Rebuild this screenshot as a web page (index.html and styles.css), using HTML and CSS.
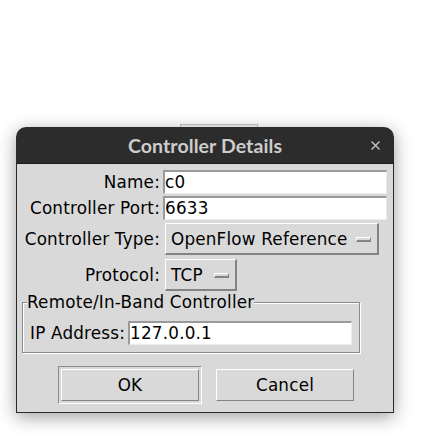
FILE: index.html
```html
<!DOCTYPE html>
<html>
<head>
<meta charset="utf-8">
<link rel="stylesheet" href="styles.css">
</head>
<body>
<div class="desk">
  <div class="behind"></div>
  <div class="dialog">
    <div class="titlebar">
      <span></span>
      <span class="title">Controller Details</span>
      <span class="close"><svg width="9" height="9" viewBox="0 0 9 9"><path d="M0.5 0.5L8.5 8.5M8.5 0.5L0.5 8.5" stroke="#c8c8c8" stroke-width="1.3" fill="none"/></svg></span>
    </div>
    <div class="content">
      <div class="row r1"><span class="lbl">Name:</span><div class="entry">c0</div></div>
      <div class="row r2"><span class="lbl">Controller Port:</span><div class="entry">6633</div></div>
      <div class="row r3"><span class="lbl">Controller Type:</span><div class="menubtn type"><span>OpenFlow Reference</span><i class="ind"></i></div></div>
      <div class="row r4"><span class="lbl">Protocol:</span><div class="menubtn proto"><span>TCP</span><i class="ind"></i></div></div>
      <fieldset class="group">
        <legend>Remote/In-Band Controller</legend>
        <div class="iprow"><span class="iplbl">IP Address:</span><div class="entry">127.0.0.1</div></div>
      </fieldset>
      <div class="buttons">
        <div class="defring"><div class="btn">OK</div></div>
        <div class="btn">Cancel</div>
      </div>
    </div>
  </div>
</div>
</body>
</html>
```

FILE: styles.css
```css
html, body {
  margin: 0;
  padding: 0;
  background: #ffffff;
}
.desk {
  position: relative;
  padding: 127px 0 0 16px;
  height: 315px;
  font-family: "DejaVu Sans", sans-serif;
  font-size: 16.8px;
  letter-spacing: 0.2px;
  color: #000;
}
.behind {
  position: absolute;
  left: 180px;
  top: 124px;
  width: 76px;
  height: 10px;
  border: 1px solid #c6c6c6;
  background: #f4f4f4;
}
.dialog {
  position: relative;
  width: 378px;
  box-shadow: 0 4px 18px rgba(0, 0, 0, 0.38);
  border-radius: 10px 10px 0 0;
}
.titlebar {
  height: 37px;
  box-sizing: border-box;
  background: #2c2c2c;
  border-bottom: 1px solid #1e1e1e;
  border-radius: 10px 10px 0 0;
  display: grid;
  grid-template-columns: 1fr auto 1fr;
  align-items: center;
}
.title {
  font-family: "Lato", sans-serif;
  font-weight: 700;
  font-size: 19.5px;
  letter-spacing: 0.1px;
  color: #cdcdcd;
  padding-top: 1px;
}
.close {
  justify-self: end;
  margin-right: 14px;
  display: flex;
  margin-top: 1px;
}
.content {
  background: #d9d9d9;
  border: 1px solid #2a2a2a;
  border-top: none;
  padding: 6px 0 8px 0;
}
.row {
  display: flex;
  align-items: center;
}
.lbl {
  width: 143px;
  text-align: right;
  margin-right: 3px;
  white-space: nowrap;
}
.r2 { margin-top: 2px; }
.r3 { margin-top: 3px; }
.r4 { margin-top: 4px; }
.entry {
  box-sizing: border-box;
  width: 224px;
  height: 24px;
  background: #ffffff;
  border-top: 2px solid #9a9a9a;
  border-left: 2px solid #9a9a9a;
  border-bottom: 1px solid #ececec;
  border-right: 1px solid #ececec;
  padding-left: 0;
  line-height: 21px;
  white-space: nowrap;
}
.menubtn {
  box-sizing: border-box;
  height: 32px;
  margin-left: 2px;
  display: flex;
  align-items: center;
  padding: 0 6px 0 5px;
  background: #d9d9d9;
  border-top: 1px solid #ffffff;
  border-left: 1px solid #ffffff;
  border-bottom: 2px solid #838383;
  border-right: 2px solid #838383;
  white-space: nowrap;
}
.menubtn.type { width: 214px; }
.menubtn.proto { width: 72px; }
.ind {
  margin-left: auto;
  box-sizing: border-box;
  width: 15px;
  height: 5px;
  background: #d9d9d9;
  border-top: 1px solid #ffffff;
  border-left: 1px solid #ffffff;
  border-bottom: 2px solid #838383;
  border-right: 1px solid #838383;
  margin-top: 1px;
}
.group {
  box-sizing: border-box;
  width: 338px;
  margin: 3px 0 0 5px;
  padding: 10px 6px 7px 7px;
  border: 1px solid #8a8a8a;
  box-shadow: inset 1px 1px 0 #ffffff, 1px 1px 0 #ffffff;
  min-width: 0;
}
.group legend {
  padding: 0;
  margin-left: -3px;
  line-height: 17px;
  background: #d9d9d9;
}
.iprow {
  display: flex;
  align-items: center;
}
.iplbl {
  margin-right: 3px;
  white-space: nowrap;
}
.buttons {
  display: flex;
  align-items: center;
  margin-top: 13px;
  padding-left: 41px;
  gap: 14px;
}
.defring {
  padding: 2px;
  border-top: 1px solid #8a8a8a;
  border-left: 1px solid #8a8a8a;
  border-bottom: 1px solid #ffffff;
  border-right: 1px solid #ffffff;
}
.btn {
  box-sizing: border-box;
  width: 138px;
  height: 32px;
  display: flex;
  align-items: center;
  justify-content: center;
  background: #d9d9d9;
  border-top: 1px solid #ffffff;
  border-left: 1px solid #ffffff;
  border-bottom: 1px solid #838383;
  border-right: 1px solid #838383;
}
```
